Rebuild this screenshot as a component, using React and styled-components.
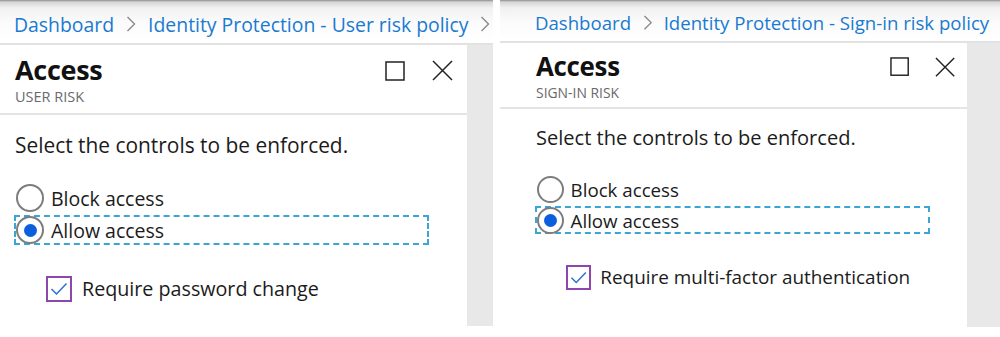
import React from "react";
import styled, { createGlobalStyle } from "styled-components";

const Global = createGlobalStyle`
  html, body { margin: 0; padding: 0; background: #fff; }
  body { font-family: "Open Sans", "Noto Sans", sans-serif; }
`;

const Page = styled.div`
  width: 1000px;
  height: 337px;
  display: flex;
  overflow: hidden;
  background: #fff;
`;

const Shot = styled.div`
  width: ${(p) => p.$w}px;
  flex: none;
  margin-right: ${(p) => p.$mr || 0}px;
  display: flex;
  flex-direction: column;
`;

const Crumbs = styled.div`
  height: ${(p) => p.$h}px;
  box-sizing: border-box;
  padding-left: ${(p) => p.$pl}px;
  padding-top: ${(p) => p.$pt}px;
  display: flex;
  align-items: center;
  gap: ${(p) => p.$gap}px;
  background: linear-gradient(#8d8d8d 0, #d6d6d6 2px, #f1f1f1 8px, #fbfbfb 22px, #fff 100%);
  border-bottom: 2px solid #e2e2e2;
  font-size: ${(p) => p.$fs}px;
  white-space: nowrap;
  overflow: hidden;
`;

const Crumb = styled.span`
  color: #1a7ad0;
`;

const Chev = styled.svg`
  flex: none;
`;

const Body = styled.div`
  display: flex;
  height: ${(p) => p.$h}px;
`;

const Blade = styled.div`
  flex: 1;
  background: #fff;
  display: flex;
  flex-direction: column;
`;

const Gutter = styled.div`
  width: ${(p) => p.$w}px;
  flex: none;
  background: #e8e8e8;
`;

const Header = styled.div`
  height: ${(p) => p.$h}px;
  box-sizing: border-box;
  border-bottom: 2px solid #e4e4e4;
  padding-left: ${(p) => p.$pl}px;
  padding-right: ${(p) => p.$pr}px;
  padding-top: ${(p) => p.$pt}px;
  display: flex;
  justify-content: space-between;
  align-items: flex-start;
`;

const Titles = styled.div`
  display: flex;
  flex-direction: column;
`;

const Title = styled.div`
  font-weight: 700;
  font-size: ${(p) => p.$fs}px;
  line-height: ${(p) => p.$lh}px;
  color: #111;
  letter-spacing: -0.3px;
`;

const Sub = styled.div`
  font-size: ${(p) => p.$fs}px;
  line-height: ${(p) => p.$lh}px;
  color: #6a6a6a;
  text-transform: uppercase;
`;

const Tools = styled.div`
  display: flex;
  gap: ${(p) => p.$gap}px;
  align-items: center;
  padding-top: ${(p) => p.$pt}px;
`;

const Content = styled.div`
  padding-left: ${(p) => p.$pl}px;
  padding-top: ${(p) => p.$pt}px;
  display: flex;
  flex-direction: column;
`;

const Lead = styled.div`
  font-size: ${(p) => p.$fs}px;
  line-height: ${(p) => p.$lh}px;
  color: #1b1b1b;
`;

const Options = styled.div`
  display: flex;
  flex-direction: column;
  gap: ${(p) => p.$gap}px;
  margin-top: ${(p) => p.$mt}px;
  width: ${(p) => p.$w}px;
`;

const Option = styled.div`
  display: flex;
  align-items: center;
  gap: ${(p) => p.$gap}px;
  height: ${(p) => p.$h}px;
  box-sizing: border-box;
  border: 2px dashed ${(p) => (p.$focus ? "#3aa6d6" : "transparent")};
  margin-left: -1px;
  font-size: ${(p) => p.$fs}px;
  color: #1b1b1b;
`;

const Radio = styled.span`
  width: ${(p) => p.$d}px;
  height: ${(p) => p.$d}px;
  box-sizing: border-box;
  border-radius: 50%;
  border: 2px solid #7d7d7d;
  display: flex;
  align-items: center;
  justify-content: center;
  flex: none;
  &::after {
    content: "";
    width: ${(p) => Math.round(p.$d * 0.48)}px;
    height: ${(p) => Math.round(p.$d * 0.48)}px;
    border-radius: 50%;
    background: ${(p) => (p.$on ? "#0b5fdc" : "transparent")};
  }
`;

const CheckRow = styled.div`
  display: flex;
  align-items: center;
  gap: ${(p) => p.$gap}px;
  margin-top: ${(p) => p.$mt}px;
  margin-left: ${(p) => p.$ml}px;
  font-size: ${(p) => p.$fs}px;
  color: #1b1b1b;
`;

const Box = styled.span`
  width: ${(p) => p.$d}px;
  height: ${(p) => p.$d}px;
  box-sizing: border-box;
  border: 2px solid #8c46ae;
  display: flex;
  align-items: center;
  justify-content: center;
  flex: none;
`;

const Chevron = ({ s }) => (
  <Chev width={10 * s} height={18 * s} viewBox="0 0 10 18">
    <path d="M1.5 2 L8.5 9 L1.5 16" fill="none" stroke="#8a8a8a" strokeWidth="1.4" />
  </Chev>
);

const Panel = ({ s, cfg }) => (
  <Shot $w={cfg.w} $mr={cfg.mr}>
    <Crumbs $h={cfg.crumbH} $pt={cfg.crumbPt} $pl={cfg.pl - 1} $gap={12 * s} $fs={19.4 * s}>
      <Crumb>Dashboard</Crumb>
      <Chevron s={s} />
      <Crumb>{cfg.crumb}</Crumb>
      {cfg.trail && <Chevron s={s} />}
    </Crumbs>
    <Body $h={cfg.bodyH}>
      <Blade>
        <Header $h={cfg.headH} $pl={cfg.pl} $pr={cfg.pr} $pt={cfg.headPt}>
          <Titles>
            <Title $fs={27 * s} $lh={32 * s}>Access</Title>
            <Sub $fs={14.5 * s} $lh={22 * s}>{cfg.sub}</Sub>
          </Titles>
          <Tools $gap={27 * s} $pt={cfg.toolPt}>
            <svg width={20 * s} height={20 * s} viewBox="0 0 20 20">
              <rect x="1" y="1" width="18" height="18" fill="none" stroke="#222" strokeWidth="1.5" />
            </svg>
            <svg width={21 * s} height={21 * s} viewBox="0 0 21 21">
              <path d="M1 1 L20 20 M20 1 L1 20" stroke="#222" strokeWidth="1.5" />
            </svg>
          </Tools>
        </Header>
        <Content $pl={cfg.pl} $pt={cfg.contentPt}>
          <Lead $fs={20.9 * s} $lh={26 * s}>Select the controls to be enforced.</Lead>
          <Options $mt={cfg.optMt} $w={cfg.optW} $gap={2 * s}>
            <Option $gap={7 * s} $h={30 * s} $fs={19.5 * s}>
              <Radio $d={28 * s} />
              Block access
            </Option>
            <Option $gap={7 * s} $h={30 * s} $fs={19.5 * s} $focus>
              <Radio $d={28 * s} $on />
              Allow access
            </Option>
          </Options>
          <CheckRow $gap={10 * s} $mt={cfg.chkMt} $ml={31 * s} $fs={19.7 * s}>
            <Box $d={26 * s}>
              <svg width={18 * s} height={14 * s} viewBox="0 0 18 14">
                <path d="M1.5 7 L6.5 12 L16.5 1.5" fill="none" stroke="#2c6fcf" strokeWidth="1.5" />
              </svg>
            </Box>
            {cfg.check}
          </CheckRow>
        </Content>
      </Blade>
      <Gutter $w={cfg.gutter} />
    </Body>
  </Shot>
);

const left = {
  w: 493, mr: 7, pl: 15, pr: 14, crumbH: 45, crumbPt: 5, bodyH: 281, headH: 70, headPt: 9, toolPt: 6,
  contentPt: 17, optMt: 25, optW: 414, chkMt: 30, gutter: 26,
  crumb: "Identity Protection - User risk policy", trail: true, sub: "User risk",
  check: "Require password change",
};

const right = {
  w: 500, mr: 0, pl: 36, pr: 12, crumbH: 43, crumbPt: 4, bodyH: 284, headH: 66, headPt: 8, toolPt: 6,
  contentPt: 17, optMt: 24, optW: 394, chkMt: 30, gutter: 33,
  crumb: "Identity Protection - Sign-in risk policy", trail: false, sub: "Sign-in risk",
  check: "Require multi-factor authentication",
};

export default function App() {
  return (
    <>
      <Global />
      <Page>
        <Panel s={1} cfg={left} />
        <Panel s={0.96} cfg={right} />
      </Page>
    </>
  );
}
